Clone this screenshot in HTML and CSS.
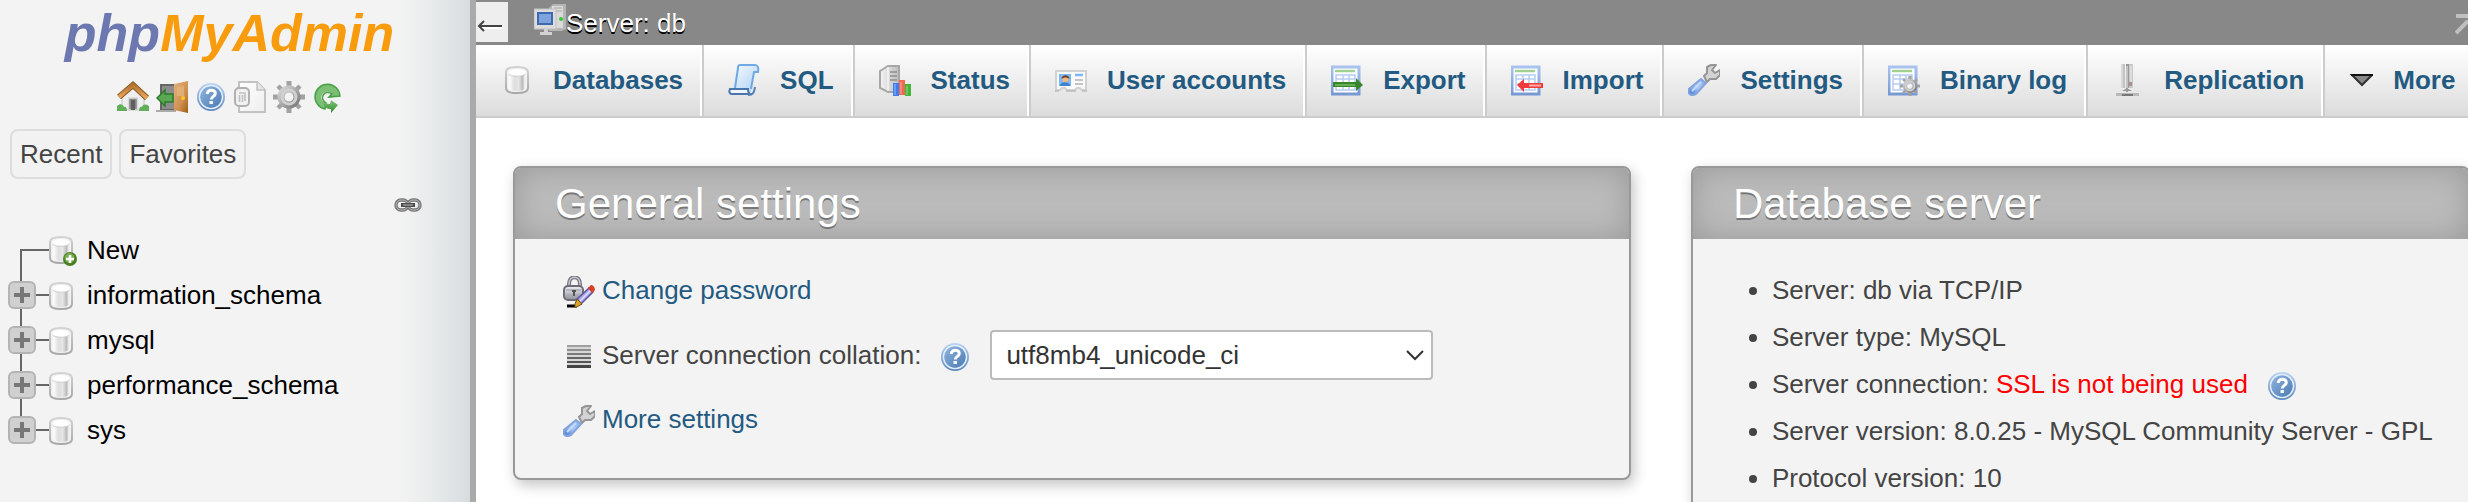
FILE: index.html
```html
<!DOCTYPE html>
<html lang="en">
<head>
<meta charset="utf-8">
<title>phpMyAdmin</title>
<link rel="stylesheet" href="styles.css">
</head>
<body>
<svg class="sprite" width="0" height="0" aria-hidden="true">
  <defs>
    <linearGradient id="gCyl" x1="0" x2="1" y1="0" y2="0"><stop offset="0" stop-color="#fff"/><stop offset=".35" stop-color="#dedede"/><stop offset=".6" stop-color="#e6e6e6"/><stop offset=".85" stop-color="#bbb"/><stop offset="1" stop-color="#f4f4f4"/></linearGradient>
    <linearGradient id="gRim" x1="0" x2="0" y1="0" y2="1"><stop offset="0" stop-color="#d2d2d2"/><stop offset="1" stop-color="#a8a8a8"/></linearGradient>
    <linearGradient id="gRoof" x1="0" x2="0" y1="0" y2="1"><stop offset="0" stop-color="#b5752f"/><stop offset="1" stop-color="#e8a55c"/></linearGradient>
    <linearGradient id="gDoor" x1="0" x2="1" y1="0" y2="1"><stop offset="0" stop-color="#e5b27c"/><stop offset=".6" stop-color="#cf8f50"/><stop offset="1" stop-color="#9a5f12"/></linearGradient>
    <linearGradient id="gHelp" x1="0" x2="0" y1="0" y2="1"><stop offset="0" stop-color="#bcd4f3"/><stop offset="1" stop-color="#5d88bb"/></linearGradient>
    <linearGradient id="gHelpIn" x1="0" x2="1" y1="0" y2="1"><stop offset="0" stop-color="#8fb4df"/><stop offset="1" stop-color="#4c7bb3"/></linearGradient>
    <linearGradient id="gPage" x1="0" x2="1" y1="0" y2="1"><stop offset="0" stop-color="#fff"/><stop offset="1" stop-color="#eee"/></linearGradient>
    <linearGradient id="gGear" x1="0" x2="1" y1="0" y2="1"><stop offset="0" stop-color="#d2d2d2"/><stop offset="1" stop-color="#7f7f7f"/></linearGradient>
    <linearGradient id="gGreen" x1="0" x2="0" y1="0" y2="1"><stop offset="0" stop-color="#85c57d"/><stop offset="1" stop-color="#2e8a2a"/></linearGradient>
    <linearGradient id="gScroll" x1="0" x2="1" y1="0" y2="1"><stop offset="0" stop-color="#f4faff"/><stop offset="1" stop-color="#add1f5"/></linearGradient>
    <linearGradient id="gBlue" x1="0" x2="0" y1="0" y2="1"><stop offset="0" stop-color="#a9c3ef"/><stop offset="1" stop-color="#7799d3"/></linearGradient>
    <linearGradient id="gHandle" x1="1" x2="0" y1="0" y2="1"><stop offset="0" stop-color="#86abe8"/><stop offset=".5" stop-color="#abc8f4"/><stop offset="1" stop-color="#3c70cf"/></linearGradient>
    <linearGradient id="gLock" x1="0" x2="0" y1="0" y2="1"><stop offset="0" stop-color="#f1f1f7"/><stop offset="1" stop-color="#8f8f9d"/></linearGradient>
    <linearGradient id="gTower" x1="0" x2="1" y1="0" y2="0"><stop offset="0" stop-color="#f4f4f4"/><stop offset="1" stop-color="#bcbcbc"/></linearGradient>
  </defs>

  <symbol id="i-db" viewBox="0 0 24 28">
    <path d="M1 6C1 2 7 1 12 1s11 1 11 5v16c0 4-6 5-11 5S1 26 1 22z" fill="#f2f2f2" stroke="url(#gRim)" stroke-width="2"/>
    <path d="M4 8h16v14c0 2-4 3-8 3s-8-1-8-3z" fill="url(#gCyl)"/>
    <ellipse cx="12" cy="6.500" rx="8.500" ry="3.500" fill="#fff"/>
    <path d="M3.500 8c2 3 15 3 17 0" fill="none" stroke="#d0d0d0"/>
  </symbol>
  <symbol id="i-dbnew" viewBox="0 0 28 30">
    <use href="#i-db" x="0" y="0" width="24" height="28"/>
    <circle cx="21" cy="23" r="7" fill="#4a7f24"/><circle cx="20.500" cy="22" r="5" fill="#79ab4e"/>
    <path d="M21 19v8M17 23h8" stroke="#fff" stroke-width="2.600"/>
  </symbol>
  <symbol id="i-home" viewBox="0 0 32 32">
    <path d="M5 13 16 4l11 10v15H5z" fill="#efefef" stroke="#c4c4c4"/>
    <rect x="11.500" y="17" width="9" height="12" fill="#888" stroke="#d9d9d9" stroke-width="1.500"/><rect x="14" y="19" width="4" height="10" fill="#5f5f5f"/>
    <path d="M2 16 16 4l14 13" fill="none" stroke="#8b5a26" stroke-width="6"/>
    <path d="M2 16 16 4l14 13" fill="none" stroke="url(#gRoof)" stroke-width="4"/>
    <path d="M0 30v-5c3-3 6-2 7 1 2-1 3 1 3 4zM32 30v-5c-3-2-6-2-7 1-2-1-3 1-3 4z" fill="#62ae5b"/>
  </symbol>
  <symbol id="i-exit" viewBox="0 0 32 32">
    <path d="M5 4h14v25H5z" fill="#8d8d8d" stroke="#666" stroke-width="2"/><path d="M0 29h20v2H0z" fill="#aaa"/>
    <path d="M18 3 32 0v32l-14-3z" fill="url(#gDoor)"/><path d="M21 6l7-1v10l-7 0z" fill="#e6b682" opacity=".7"/>
    <circle cx="27" cy="17" r="2" fill="#ffc629"/>
    <path d="M1 17 9 9v4h8v8H9v4z" fill="#5aa851" stroke="#2b7c2c" stroke-width="1.500"/>
  </symbol>
  <symbol id="i-help" viewBox="0 0 32 32">
    <circle cx="16" cy="16" r="14" fill="url(#gHelp)"/><circle cx="16" cy="16" r="11.500" fill="none" stroke="#e4eefb" stroke-width="1.500"/>
    <circle cx="16" cy="16" r="10.500" fill="url(#gHelpIn)"/>
    <path d="M12.300 13c0-5 8-5 8-.5 0 3-4 2.800-4 6" fill="none" stroke="#fff" stroke-width="3"/><rect x="14.500" y="20" width="3.400" height="3" fill="#fff"/>
  </symbol>
  <symbol id="i-docs" viewBox="0 0 32 32">
    <path d="M5 1h18l8 8v22H5z" fill="url(#gPage)" stroke="#c2c2c2" stroke-width="2"/><path d="M23 1v8h8" fill="#e6e6e6" stroke="#c2c2c2" stroke-width="1.500"/>
    <rect x="1" y="7" width="14" height="18" rx="4" fill="#f1f1f1" stroke="#b0b0b0" stroke-width="2"/>
    <path d="M5 12h7M5.500 14v7M8.500 14v7M11 13v7" stroke="#c2c2c2" stroke-width="1.700"/>
  </symbol>
  <symbol id="i-gear" viewBox="0 0 32 32">
    <path d="M16 0v10M16 22v10M0 16h10M22 16h10" stroke="#a2a2a2" stroke-width="5"/><path d="M5 5l6 6M21 21l6 6M27 5l-6 6M5 27l6-6" stroke="#a2a2a2" stroke-width="4.500"/>
    <circle cx="16" cy="16" r="8" fill="none" stroke="url(#gGear)" stroke-width="7"/>
    <circle cx="16" cy="16" r="7" fill="none" stroke="#d0d0d0" stroke-width="3"/>
    <circle cx="16" cy="16" r="3.500" fill="#f3f3f3"/>
  </symbol>
  <symbol id="i-reload" viewBox="0 0 32 32">
    <path d="M28 15A12.500 12.500 0 1 0 13 28v-6c-8-5-1-15 6-10l-3 5z" fill="#7bc074"/>
    <path d="M28 15A12.500 12.500 0 1 0 13 28l1-6c-8-5-1-14 6-9l-3 3z" fill="none" stroke="#4ba048" stroke-width="1.500"/>
    <path d="M11 22l7 1 1-4 7 5-7 8v-4c-4 0-7-2-8-6z" fill="url(#gGreen)"/>
  </symbol>
  <symbol id="i-link" viewBox="0 0 28 16">
    <rect x="2" y="3" width="12" height="10" rx="5" fill="none" stroke="#777" stroke-width="3.500"/>
    <rect x="14" y="3" width="12" height="10" rx="5" fill="none" stroke="#777" stroke-width="3.500"/>
    <rect x="2" y="3" width="12" height="10" rx="5" fill="none" stroke="#b5b5b5"/><rect x="14" y="3" width="12" height="10" rx="5" fill="none" stroke="#b5b5b5"/>
    <path d="M7 8h14" stroke="#4b4b4b" stroke-width="4"/><path d="M9 8h10" stroke="#999" stroke-width="1.500"/>
  </symbol>
  <symbol id="i-server" viewBox="0 0 32 32">
    <path d="M15 5l4-4h13v25l-4 2H15z" fill="#b5b5b5"/><path d="M18 3h11v22H18z" fill="#dadada"/><path d="M20 5h8M20 8h8" stroke="#aaa"/>
    <circle cx="27" cy="16" r="2" fill="#36c636"/>
    <rect x="0" y="6" width="22" height="20" fill="#dcdcdc" stroke="#c2c2c2"/><rect x="3" y="9" width="16" height="13" fill="#3e68b0"/><rect x="5" y="11" width="12" height="9" fill="#7da4dc"/>
    <path d="M10 26h4v3h4v3H6v-3h4z" fill="#d2d2d2"/>
  </symbol>
  <symbol id="i-sql" viewBox="0 0 32 32">
    <path d="M7 1h20c3 0 4 3 3 6l-2 2-2-2-3 17v4H6z" fill="url(#gScroll)"/>
    <path d="M7 24 10 4c0-3 1-3 3-3h14c3 0 4 3 3 7h-4l-3 17" fill="none" stroke="#6fa8e2" stroke-width="2"/>
    <path d="M2 25h18c0 3 1 5 3 5H4c-3 0-3-3-2-5z" fill="#f0f6ff" stroke="#4a76ae" stroke-width="2"/>
    <path d="M20 31c6 0 6-3 7-8" fill="none" stroke="#567fb5" stroke-width="2"/>
  </symbol>
  <symbol id="i-status" viewBox="0 0 32 32">
    <path d="M1 7l8-5h11v26H9l-8-4z" fill="url(#gTower)" stroke="#a7a7a7" stroke-width="2"/><path d="M9 3v24" stroke="#f4f4f4" stroke-width="1.500"/>
    <path d="M11 8h7M11 12h7M11 16h7" stroke="#8e8e8e" stroke-width="1.500"/>
    <path d="M14 19h6v13h-6z" fill="#3f7ef2"/><path d="M20 16h6v15h-6z" fill="#f06a52"/><path d="M26 20h6v12h-6z" fill="#43b539"/><path d="M16 20v11M22 18v12M28 22v9" stroke="#fff" stroke-opacity=".3" stroke-width="1.500"/>
  </symbol>
  <symbol id="i-user" viewBox="0 0 32 32">
    <path d="M1 7h30v19h-4l-2-2h-3l-2 2h-8l-2-2H7l-2 2H1z" fill="#fafafa" stroke="#d2d2d2" stroke-width="2"/><path d="M0 27h4M11 27h10M27 27h5" stroke="#aaa"/>
    <rect x="4" y="10" width="12" height="12" fill="#7dbaf5"/><path d="M5 22c0-5 10-5 10 0z" fill="#3f82ce"/><circle cx="10.500" cy="15" r="3.300" fill="#edb689"/><path d="M6.500 15c0-5 8-5 8 0-3-2-5-2-8 0z" fill="#6e4325"/>
    <path d="M20 11h8" stroke="#7db8f2" stroke-width="2.500"/><path d="M20 16h8M20 20h8" stroke="#c4c4c4" stroke-width="2"/>
  </symbol>
  <symbol id="i-table" viewBox="0 0 32 32">
    <rect x="1" y="3" width="27" height="27" fill="#fff" stroke="url(#gBlue)" stroke-width="3"/>
    <path d="M4 7h20" stroke="#a1d193" stroke-width="2.500"/><path d="M5 11h19v15H5z" fill="#fff" stroke="#b6cdf3" stroke-width="1.500"/><path d="M5 15h19M5 20h19M12 11v15M18 11v15" stroke="#b6cdf3" stroke-width="1.500"/>
  </symbol>
  <symbol id="i-export" viewBox="0 0 32 32">
    <use href="#i-table" width="32" height="32"/>
    <path d="M2 18h23v-4l7 7-7 6v-4H2z" fill="#37862b"/><path d="M4 21h20" stroke="#79bd63" stroke-width="1.500"/>
  </symbol>
  <symbol id="i-import" viewBox="0 0 32 32">
    <use href="#i-table" width="32" height="32"/>
    <path d="M6 21l7-6v4h19v5H13v4z" fill="#f03b3b"/><path d="M18 21.500h12" stroke="#ffaaa4" stroke-width="2"/>
  </symbol>
  <symbol id="i-wrench" viewBox="0 0 32 32">
    <path d="M16 12l3-3V3l4-2h5l-4 5 3 3 5-3v5l-4 4h-6l-3 3z" fill="#d3d3d3" stroke="#959595" stroke-width="2" stroke-linejoin="round"/>
    <path d="M13 15l5 4-10 11c-5 3-9-1-7-5z" fill="url(#gHandle)" stroke="#82a4df" stroke-width="2"/>
    <path d="M13 18 4 27" stroke="#c6daf8" stroke-width="2"/>
  </symbol>
  <symbol id="i-binlog" viewBox="0 0 32 32">
    <use href="#i-table" width="32" height="32"/><use href="#i-gear" x="12" y="12" width="20" height="20"/>
  </symbol>
  <symbol id="i-repl" viewBox="0 0 32 32">
    <path d="M9 0h4v24H9z" fill="#c2c2c2"/><path d="M14 0h3v24h-3z" fill="#989898"/><path d="M17 0h4v24h-4z" fill="#c9c9c9"/><path d="M10 0v24M15 2v22M19 2v18" stroke="#eee"/>
    <path d="M14 24h2v4h-2zM10 27l5-3 5 3z" fill="#999"/><path d="M4 29h23v3H4z" fill="#b9b9b9"/><path d="M10 31h11" stroke="#777" stroke-width="2"/>
    <path d="M17 18h3v4h-3z" fill="#a98f8f"/>
  </symbol>
  <symbol id="i-lock" viewBox="0 0 32 32">
    <path d="M6 12V8c0-9 11-9 11 0v4" fill="none" stroke="#777782" stroke-width="4"/><path d="M6 12V8c0-9 11-9 11 0v4" fill="none" stroke="#c6c6d0" stroke-width="1.500"/>
    <rect x="1" y="10" width="19" height="14" rx="4" fill="url(#gLock)" stroke="#6d6d77" stroke-width="2"/><path d="M3 14h15M3 19h15" stroke="#aaaab5" stroke-width="1.500"/><path d="M11 14v6M9 15h4" stroke="#555" stroke-width="2"/>
    <path d="M4 30h10" stroke="#000" stroke-width="3"/>
    <path d="M14 23 26 12l4 4-12 12z" fill="#a9a4ea" stroke="#5a549b" stroke-width="1.500"/><path d="M17 25 28 14" stroke="#e4e2ff" stroke-width="1.500"/>
    <path d="M25 12l3-3c2 0 4 2 4 5l-3 3z" fill="#dc3e23"/><path d="M14 23l5 5-7 4v-4z" fill="#dba32c" stroke="#6e5210"/>
  </symbol>
  <symbol id="i-lines" viewBox="0 0 32 32">
    <path d="M4 5h24" stroke="#a0a0a0" stroke-width="2"/><path d="M4 9h24" stroke="#8f8f8f" stroke-width="2"/><path d="M4 13h24" stroke="#7b7b7b" stroke-width="2"/><path d="M4 17h24" stroke="#666" stroke-width="2"/><path d="M4 21h24" stroke="#555" stroke-width="2"/><path d="M4 25.500h24" stroke="#444" stroke-width="3"/>
    <path d="M4 7h24M4 11h24M4 15h24M4 19h24M4 23h24" stroke="#bbb"/>
  </symbol>
  <symbol id="i-plus" viewBox="0 0 28 28">
    <rect x="1" y="1" width="26" height="26" rx="5" fill="#d0d0d0" stroke="#b4b4b4" stroke-width="2"/><path d="M14 6v16M6 14h16" stroke="#777" stroke-width="4"/>
  </symbol>
</svg>

<div class="page">
  <aside class="sidebar">
    <a class="logo" href="#"><span class="logo-php">php</span><span class="logo-admin">MyAdmin</span></a>
    <nav class="tools" aria-label="Tools">
      <a href="#" aria-label="Home"><svg class="icon"><use href="#i-home"/></svg></a>
      <a href="#" aria-label="Log out"><svg class="icon"><use href="#i-exit"/></svg></a>
      <a href="#" aria-label="phpMyAdmin documentation"><svg class="icon"><use href="#i-help"/></svg></a>
      <a href="#" aria-label="MySQL documentation"><svg class="icon"><use href="#i-docs"/></svg></a>
      <a href="#" aria-label="Navigation panel settings"><svg class="icon"><use href="#i-gear"/></svg></a>
      <a href="#" aria-label="Reload navigation panel"><svg class="icon"><use href="#i-reload"/></svg></a>
    </nav>
    <div class="quick">
      <button class="quick-button" type="button">Recent</button>
      <button class="quick-button" type="button">Favorites</button>
    </div>
    <div class="link-row"><a href="#" aria-label="Unlink from main panel"><svg class="icon-link"><use href="#i-link"/></svg></a></div>
    <ul class="tree">
      <li class="node">
        <svg class="branch" viewBox="0 0 41 45" aria-hidden="true"><path d="M13 45V22h28" fill="none" stroke="#666" stroke-width="2"/></svg>
        <svg class="icon-dbnew"><use href="#i-dbnew"/></svg><a href="#">New</a>
      </li>
      <li class="node">
        <button class="branch" type="button" aria-label="Expand information_schema"><svg viewBox="0 0 41 45"><path d="M13 0v45M28 22h13" fill="none" stroke="#666" stroke-width="2"/><use href="#i-plus" y="8" width="28" height="28"/></svg></button>
        <svg class="icon-db"><use href="#i-db"/></svg><a href="#">information_schema</a>
      </li>
      <li class="node">
        <button class="branch" type="button" aria-label="Expand mysql"><svg viewBox="0 0 41 45"><path d="M13 0v45M28 22h13" fill="none" stroke="#666" stroke-width="2"/><use href="#i-plus" y="8" width="28" height="28"/></svg></button>
        <svg class="icon-db"><use href="#i-db"/></svg><a href="#">mysql</a>
      </li>
      <li class="node">
        <button class="branch" type="button" aria-label="Expand performance_schema"><svg viewBox="0 0 41 45"><path d="M13 0v45M28 22h13" fill="none" stroke="#666" stroke-width="2"/><use href="#i-plus" y="8" width="28" height="28"/></svg></button>
        <svg class="icon-db"><use href="#i-db"/></svg><a href="#">performance_schema</a>
      </li>
      <li class="node">
        <button class="branch" type="button" aria-label="Expand sys"><svg viewBox="0 0 41 45"><path d="M13 0v22M28 22h13" fill="none" stroke="#666" stroke-width="2"/><use href="#i-plus" y="8" width="28" height="28"/></svg></button>
        <svg class="icon-db"><use href="#i-db"/></svg><a href="#">sys</a>
      </li>
    </ul>
  </aside>

  <main class="main">
    <header class="serverbar">
      <button class="collapse" type="button" aria-label="Hide panel"><svg viewBox="0 0 32 40"><path d="M26 26H3" stroke="#fff" stroke-width="2"/><path d="M26 24H3M8 19 3 24l5 5" fill="none" stroke="#444" stroke-width="2"/></svg></button>
      <a class="server" href="#"><svg class="icon"><use href="#i-server"/></svg>Server: db</a>
      <svg class="pagetop" viewBox="0 0 13 22" aria-hidden="true"><path d="M1 3h12M1 20 13 8" stroke="#c0c0c0" stroke-width="4"/></svg>
    </header>
    <nav class="tabs" aria-label="Server">
      <a class="tab" href="#"><svg class="icon"><use href="#i-db" x="4" y="2" width="24" height="28"/></svg>Databases</a>
      <a class="tab" href="#"><svg class="icon"><use href="#i-sql"/></svg>SQL</a>
      <a class="tab" href="#"><svg class="icon"><use href="#i-status"/></svg>Status</a>
      <a class="tab" href="#"><svg class="icon"><use href="#i-user"/></svg>User accounts</a>
      <a class="tab" href="#"><svg class="icon"><use href="#i-export"/></svg>Export</a>
      <a class="tab" href="#"><svg class="icon"><use href="#i-import"/></svg>Import</a>
      <a class="tab" href="#"><svg class="icon"><use href="#i-wrench"/></svg>Settings</a>
      <a class="tab" href="#"><svg class="icon"><use href="#i-binlog"/></svg>Binary log</a>
      <a class="tab" href="#"><svg class="icon"><use href="#i-repl"/></svg>Replication</a>
      <a class="tab tab-more" href="#"><svg class="icon-more" viewBox="0 0 24 32"><path d="M3 11h20L13 21z" fill="#888" stroke="#333" stroke-width="2"/><path d="M2 11h22" stroke="#111" stroke-width="2"/></svg>More</a>
    </nav>
    <div class="cards">
      <section class="card">
        <h2 class="card-title">General settings</h2>
        <div class="settings">
          <a class="setting" href="#"><svg class="icon"><use href="#i-lock"/></svg>Change password</a>
          <div class="setting setting-collation">
            <svg class="icon"><use href="#i-lines"/></svg>
            <label for="collation">Server connection collation:</label>
            <a class="help" href="#" aria-label="Documentation"><svg class="icon"><use href="#i-help"/></svg></a>
            <span class="select-wrap">
              <select id="collation" class="select"><option>utf8mb4_unicode_ci</option></select>
              <svg class="chevron" viewBox="0 0 18 12" aria-hidden="true"><path d="M1 2l8 8 8-8" fill="none" stroke="#333" stroke-width="2"/></svg>
            </span>
          </div>
          <a class="setting" href="#"><svg class="icon"><use href="#i-wrench"/></svg>More settings</a>
        </div>
      </section>
      <section class="card">
        <h2 class="card-title">Database server</h2>
        <ul class="facts">
          <li>Server: db via TCP/IP</li>
          <li>Server type: MySQL</li>
          <li><span class="fact-line"><span>Server connection: <span class="warn">SSL is not being used</span></span><a class="help" href="#" aria-label="Documentation"><svg class="icon"><use href="#i-help"/></svg></a></span></li>
          <li>Server version: 8.0.25 - MySQL Community Server - GPL</li>
          <li>Protocol version: 10</li>
        </ul>
      </section>
    </div>
  </main>
</div>
</body>
</html>
```

FILE: styles.css
```css
* { box-sizing: border-box; }

html, body { height: 100%; }

body {
  margin: 0;
  overflow: hidden;
  background: #fff;
  color: #444;
  font: 26px/47px "Liberation Sans", Arial, sans-serif;
}

a { color: #235a81; text-decoration: none; }
ul { margin: 0; padding: 0; list-style: none; }
button { font: inherit; color: inherit; margin: 0; padding: 0; border: 0; background: none; }
svg { display: block; flex: none; }

.sprite { position: absolute; }
.icon { width: 32px; height: 32px; }

.page { display: flex; height: 100%; }

/* Navigation panel */
.sidebar {
  flex: none;
  width: 476px;
  border-right: 6px solid #aaa;
  background: linear-gradient(to right, #f3f3f3 400px, #e9ecec 430px, #d8dcdf 470px);
}

.logo {
  display: flex;
  justify-content: center;
  padding: 5px 11px 0 0;
  font: italic bold 52px/56px "Liberation Sans", Arial, sans-serif;
}
.logo-php { color: #6c78af; }
.logo-admin { color: #f89c0e; }

.tools {
  display: flex;
  justify-content: center;
  gap: 7px;
  padding: 20px 9px 16px 0;
}

.quick { display: flex; gap: 7px; padding-left: 10px; }
.quick-button {
  height: 50px;
  padding: 0 8px;
  border: 2px solid #ddd;
  border-radius: 8px;
  background: #f2f2f2;
}

.link-row { display: flex; justify-content: flex-end; padding: 18px 48px 15px 0; }
.icon-link { width: 28px; height: 16px; }

.node { display: flex; align-items: center; height: 45px; padding-left: 8px; line-height: 45px; }
.node a { color: #000; }
.branch, .branch svg { width: 41px; height: 45px; }
.icon-db { width: 24px; height: 28px; margin-right: 14px; }
.icon-dbnew { width: 28px; height: 30px; margin-right: 10px; }

/* Server bar */
.main { flex: 1; min-width: 0; }

.serverbar { display: flex; align-items: flex-start; height: 45px; padding-top: 2px; background: #888; }
.collapse { width: 32px; height: 40px; background: #eee; }
.collapse svg { width: 32px; height: 40px; }
.server {
  display: flex;
  margin-left: 26px;
  color: #fff;
  line-height: 42px;
  text-shadow: 0 2px 0 #000;
}
.server .icon { margin-top: 1px; }
.pagetop { width: 13px; height: 22px; margin: 11px 0 0 auto; }

/* Tabs */
.tabs {
  display: flex;
  overflow: hidden;
  border-bottom: 2px solid #ccc;
  background: linear-gradient(#fff, #dcdcdc);
}
.tab {
  display: flex;
  flex: none;
  align-items: center;
  gap: 20px;
  padding: 19px 17px 20px 24px;
  border-left: 2px solid #ccc;
  border-right: 2px solid #fff;
  font-weight: bold;
  line-height: 32px;
}
.tab:first-child { padding-left: 25px; border-left: 0; }
.tab-more { padding-right: 0; border-right: 0; }
.icon-more { width: 24px; height: 32px; }

/* Cards */
.cards {
  display: grid;
  grid-template-columns: 33fr 23fr;
  align-items: start;
  gap: 60px;
  margin: 48px -2px 0 37px;
}
.card {
  border: 2px solid #999;
  border-radius: 8px;
  background: #f3f3f3;
  box-shadow: 3px 5px 14px #c4c4c4;
}
.card-title {
  margin: 0;
  padding: 0 40px;
  border-radius: 6px 6px 0 0;
  background: #bbb;
  box-shadow: inset 0 0 30px #999;
  color: #fff;
  font-size: 42px;
  font-weight: normal;
  line-height: 71px;
  text-shadow: 0 2px 0 #777;
}

.settings {
  display: flex;
  flex-direction: column;
  align-items: flex-start;
  gap: 16px;
  padding: 28px 48px 35px;
}
.setting { display: flex; align-items: center; gap: 7px; }
.setting .icon { margin-top: 3px; }
.help { margin-left: 11px; }

.select-wrap { position: relative; margin-left: 12px; }
.select {
  display: block;
  width: 443px;
  height: 50px;
  padding: 0 48px 2px 14px;
  border: 2px solid #bbb;
  border-radius: 4px;
  background: #fff;
  color: #333;
  font: inherit;
  appearance: none;
}
.chevron { position: absolute; right: 9px; top: 19px; width: 18px; height: 12px; pointer-events: none; }

.facts { padding: 28px 0 28px 79px; list-style: disc; white-space: nowrap; }
.fact-line { display: inline-flex; align-items: center; gap: 7px; vertical-align: top; }
.fact-line .icon { margin-top: 3px; }
.warn { color: #f00; }
```
